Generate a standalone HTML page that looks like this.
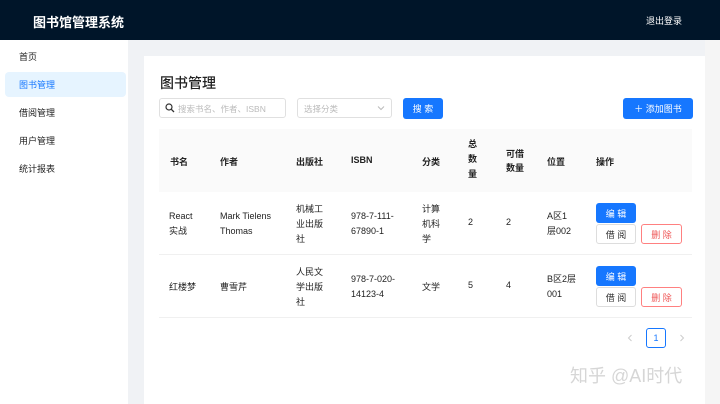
<!DOCTYPE html>
<html><head><meta charset="utf-8"><style>
*{margin:0;padding:0;box-sizing:border-box}
body{width:720px;height:404px;overflow:hidden;background:#f0f2f5;font-family:"Liberation Sans","Noto Sans CJK SC",sans-serif;font-size:9px;color:#222;position:relative}
.a{position:absolute;white-space:nowrap}
.hd{left:0;top:0;width:720px;height:40px;background:#001529}
.sb{left:0;top:40px;width:128px;height:364px;background:#fff}
.card{left:144px;top:56px;width:561px;height:348px;background:#fff}
.btn{display:flex;align-items:center;justify-content:center;border-radius:3px;font-size:9px}
.pr{background:#1677ff;color:#fff}
.df{border:1px solid #ddd;background:#fff;color:#333}
.dg{border:1px solid #ff8080;background:#fff;color:#e55}
.th{font-weight:bold;color:#222}
</style></head><body>
<div class="a hd"></div>
<div class="a" style="left:33px;top:12px;color:#fff;font-size:13px;font-weight:bold">图书馆管理系统</div>
<div class="a" style="left:646px;top:14px;color:#fff;font-size:9px">退出登录</div>
<div class="a sb"></div>
<div class="a" style="left:19px;top:50px">首页</div>
<div class="a" style="left:5px;top:72px;width:121px;height:25px;background:#e6f4ff;border-radius:4px"></div>
<div class="a" style="left:19px;top:78px;color:#1677ff">图书管理</div>
<div class="a" style="left:19px;top:106px">借阅管理</div>
<div class="a" style="left:19px;top:134px">用户管理</div>
<div class="a" style="left:19px;top:162px">统计报表</div>
<div class="a" style="left:705px;top:40px;width:15px;height:364px;background:#f5f5f5"></div>
<div class="a card"></div>
<div class="a" style="left:160px;top:73px;font-size:14px;font-weight:500">图书管理</div>
<div class="a" style="left:159px;top:98px;width:127px;height:20px;border:1px solid #e0e0e0;border-radius:3px"></div>
<svg class="a" style="left:165px;top:103px" width="10" height="10" viewBox="0 0 10 10"><circle cx="4" cy="4" r="3" fill="none" stroke="#333" stroke-width="1.2"/><path d="M6.2 6.2L9 9" stroke="#333" stroke-width="1.3"/></svg>
<div class="a" style="left:178px;top:103px;color:#bbb;font-size:8.5px">搜索书名、作者、ISBN</div>
<div class="a" style="left:297px;top:98px;width:95px;height:20px;border:1px solid #e0e0e0;border-radius:3px"></div>
<div class="a" style="left:304px;top:103px;color:#bbb;font-size:8.5px">选择分类</div>
<svg class="a" style="left:377px;top:105px" width="8" height="6" viewBox="0 0 8 6"><path d="M1 1.5L4 4.5L7 1.5" fill="none" stroke="#bbb" stroke-width="1"/></svg>
<div class="a btn pr" style="left:403px;top:98px;width:40px;height:21px">搜 索</div>
<div class="a btn pr" style="left:623px;top:98px;width:70px;height:21px">＋ 添加图书</div>
<div class="a" style="left:159px;top:129px;width:533px;height:63px;background:#fafafa"></div>
<div class="a" style="left:159px;top:254px;width:533px;height:1px;background:#f0f0f0"></div>
<div class="a" style="left:159px;top:317px;width:533px;height:1px;background:#f0f0f0"></div>
<div class="a th" style="left:170px;top:155px">书名</div>
<div class="a th" style="left:220px;top:155px">作者</div>
<div class="a th" style="left:296px;top:155px">出版社</div>
<div class="a th" style="left:351px;top:155px">ISBN</div>
<div class="a th" style="left:422px;top:155px">分类</div>
<div class="a th" style="left:468px;top:137px;line-height:15px">总<br>数<br>量</div>
<div class="a th" style="left:506px;top:147px;line-height:14px">可借<br>数量</div>
<div class="a th" style="left:547px;top:155px">位置</div>
<div class="a th" style="left:596px;top:155px">操作</div>

<div class="a" style="left:169px;top:209px;line-height:15px">React<br>实战</div>
<div class="a" style="left:220px;top:209px;line-height:15px">Mark Tielens<br>Thomas</div>
<div class="a" style="left:296px;top:202px;line-height:15px">机械工<br>业出版<br>社</div>
<div class="a" style="left:351px;top:209px;line-height:15px">978-7-111-<br>67890-1</div>
<div class="a" style="left:422px;top:202px;line-height:15px">计算<br>机科<br>学</div>
<div class="a" style="left:468px;top:217px">2</div>
<div class="a" style="left:506px;top:217px">2</div>
<div class="a" style="left:547px;top:209px;line-height:15px">A区1<br>层002</div>
<div class="a btn pr" style="left:596px;top:203px;width:40px;height:20px">编 辑</div>
<div class="a btn df" style="left:596px;top:224px;width:40px;height:20px">借 阅</div>
<div class="a btn dg" style="left:641px;top:224px;width:41px;height:20px">删 除</div>

<div class="a" style="left:169px;top:280px">红楼梦</div>
<div class="a" style="left:220px;top:280px">曹雪芹</div>
<div class="a" style="left:296px;top:265px;line-height:15px">人民文<br>学出版<br>社</div>
<div class="a" style="left:351px;top:272px;line-height:15px">978-7-020-<br>14123-4</div>
<div class="a" style="left:422px;top:280px">文学</div>
<div class="a" style="left:468px;top:280px">5</div>
<div class="a" style="left:506px;top:280px">4</div>
<div class="a" style="left:547px;top:272px;line-height:15px">B区2层<br>001</div>
<div class="a btn pr" style="left:596px;top:266px;width:40px;height:20px">编 辑</div>
<div class="a btn df" style="left:596px;top:287px;width:40px;height:20px">借 阅</div>
<div class="a btn dg" style="left:641px;top:287px;width:41px;height:20px">删 除</div>

<svg class="a" style="left:627px;top:334px" width="6" height="8" viewBox="0 0 6 8"><path d="M4.5 1L1.5 4L4.5 7" fill="none" stroke="#ccc" stroke-width="1"/></svg>
<div class="a btn" style="left:646px;top:328px;width:20px;height:20px;border:1px solid #1677ff;color:#1677ff">1</div>
<svg class="a" style="left:679px;top:334px" width="6" height="8" viewBox="0 0 6 8"><path d="M1.5 1L4.5 4L1.5 7" fill="none" stroke="#ccc" stroke-width="1"/></svg>
<div class="a" style="left:570px;top:362px;color:#d6d6d6;font-size:18px">知乎 @AI时代</div>
</body></html>
